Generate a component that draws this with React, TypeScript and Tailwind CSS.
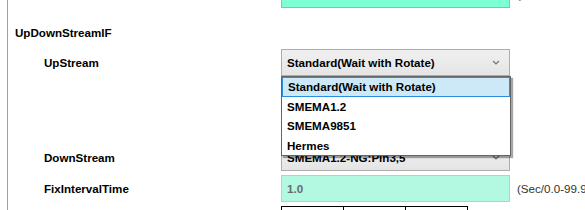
const font = { fontFamily: '"Liberation Sans", Arial, sans-serif' };

const options = ["Standard(Wait with Rotate)", "SMEMA1.2", "SMEMA9851", "Hermes"];

function Chevron() {
  return (
    <svg width="8" height="5" viewBox="0 0 8 5" className="shrink-0" aria-hidden>
      <path d="M1 1 L4 4 L7 1" stroke="#707070" strokeWidth="1.1" fill="none" />
    </svg>
  );
}

function Combo({ value }: { value: string }) {
  return (
    <div className="flex h-[27px] w-[229px] shrink-0 items-center justify-between border border-[#adadad] bg-gradient-to-b from-[#f0f0f0] to-[#e5e5e5] pl-[5px] pr-[9px]">
      <span className="whitespace-nowrap text-[11.6px] font-bold text-black">{value}</span>
      <Chevron />
    </div>
  );
}

function Row({ label, children, className }: { label: string; children: React.ReactNode; className?: string }) {
  return (
    <div className={`flex items-center ${className ?? ""}`}>
      <div className="w-[266px] shrink-0 pl-[29px] text-[11.6px] font-bold text-black">{label}</div>
      {children}
    </div>
  );
}

export default function App() {
  return (
    <div className="relative h-[210px] w-[585px] overflow-hidden bg-white" style={font}>
      <div className="ml-[7px] flex h-full flex-col border-l border-[#a0a0a0] pl-[7px]">
        {/* previous setting, scrolled off the top */}
        <div className="-mt-[19px] flex items-center">
          <div className="w-[266px] shrink-0" />
          <div className="h-[27px] w-[229px] shrink-0 border border-[#adadad] bg-[#7fffd4]" />
          <span className="ml-[7px] whitespace-nowrap text-[11.6px] leading-[27px] text-[#444]">(Sec/0.0-99.9)</span>
        </div>

        <div className="mt-[17px] h-[16px] text-[11.6px] font-bold leading-[16px] text-black">UpDownStreamIF</div>

        <Row label="UpStream" className="mt-[8px]">
          <Combo value="Standard(Wait with Rotate)" />
        </Row>

        <Row label="DownStream" className="mt-[68px]">
          <Combo value="SMEMA1.2-NG:Pin3,5" />
        </Row>

        <Row label="FixIntervalTime" className="mt-[4px]">
          <div className="flex h-[27px] w-[229px] shrink-0 items-center border border-[#c8c8c8] bg-[#b3f9e2] pl-[5px] text-[11.6px] font-bold text-[#6a6a6a]">
            1.0
          </div>
          <span className="ml-[7px] whitespace-nowrap text-[11.6px] text-[#333]">(Sec/0.0-99.9)</span>
        </Row>

        <div className="mt-[4px] flex pl-[266px]">
          {[0, 1, 2].map((i) => (
            <div key={i} className="-ml-px h-[20px] w-[63px] border border-black first:ml-0" />
          ))}
        </div>
      </div>

      {/* open dropdown list of UpStream */}
      <div className="absolute left-[281px] top-[76px] w-[230px] border border-[#646464] bg-white shadow-[2px_2px_1px_rgba(0,0,0,0.35)]">
        {options.map((o, i) => (
          <div
            key={o}
            className={`flex h-[19.5px] items-center pl-[5px] text-[11.6px] font-bold text-black ${
              i === 0 ? "border border-[#2a8fe0] bg-[#cde8f7] pl-[4px]" : ""
            }`}
          >
            {o}
          </div>
        ))}
      </div>
    </div>
  );
}
